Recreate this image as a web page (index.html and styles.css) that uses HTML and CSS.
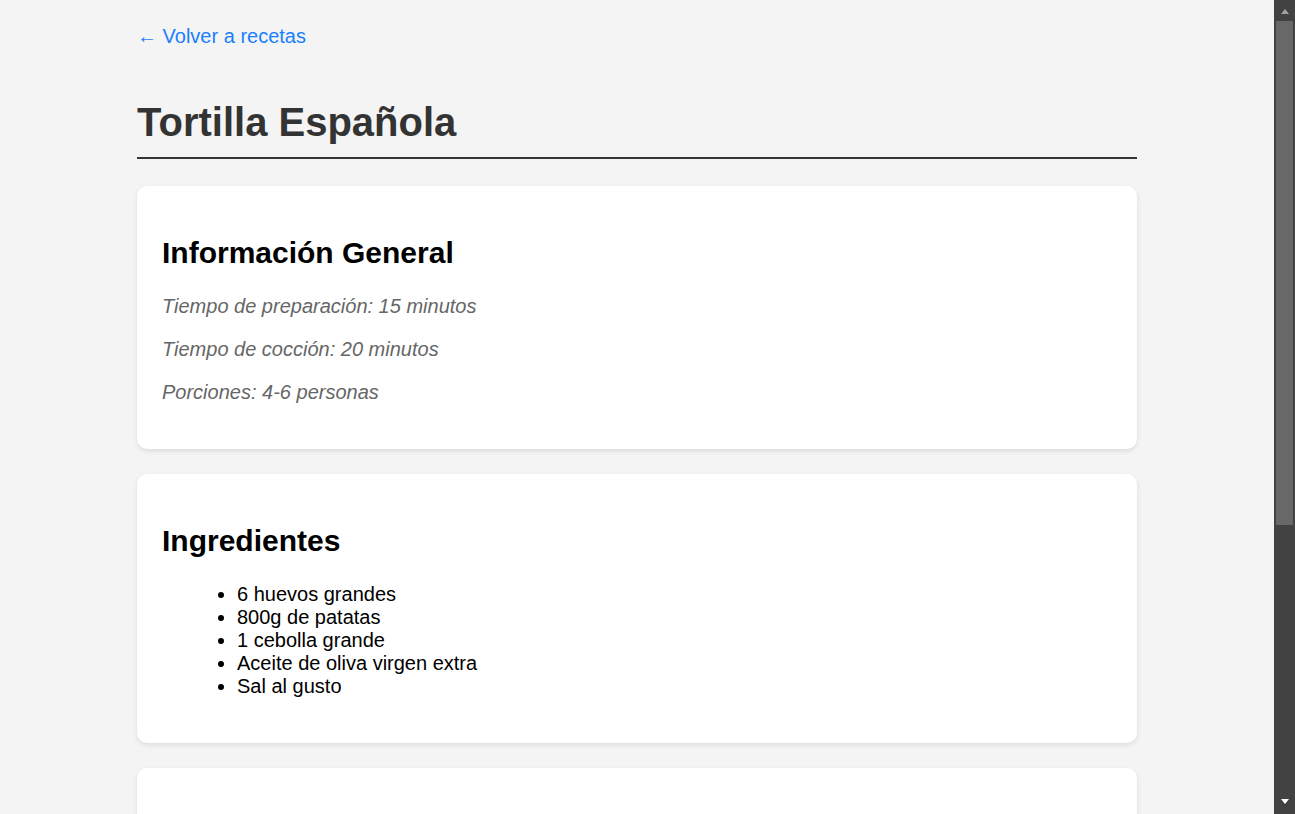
FILE: index.html
```html
<!DOCTYPE html>
<html lang="es">
<head>
<meta charset="utf-8">
<title>Tortilla Española</title>
<link rel="stylesheet" href="styles.css">
</head>
<body>
<div class="container">
  <div class="back"><a href="#" class="back-link">← Volver a recetas</a></div>
  <h1 class="title">Tortilla Española</h1>

  <section class="card">
    <h2 class="card-title">Información General</h2>
    <p class="meta">Tiempo de preparación: 15 minutos</p>
    <p class="meta">Tiempo de cocción: 20 minutos</p>
    <p class="meta">Porciones: 4-6 personas</p>
  </section>

  <section class="card">
    <h2 class="card-title">Ingredientes</h2>
    <ul class="list">
      <li>6 huevos grandes</li>
      <li>800g de patatas</li>
      <li>1 cebolla grande</li>
      <li>Aceite de oliva virgen extra</li>
      <li>Sal al gusto</li>
    </ul>
  </section>

  <section class="card">
    <h2 class="card-title">Preparación</h2>
    <ol class="list steps">
      <li>Pelar las patatas y cortarlas en láminas finas.</li>
      <li>Picar la cebolla en trozos pequeños.</li>
      <li>Calentar abundante aceite en una sartén a fuego medio.</li>
      <li>Freír las patatas y la cebolla hasta que estén tiernas.</li>
      <li>Escurrir el aceite sobrante.</li>
      <li>Batir los huevos en un bol grande con una pizca de sal.</li>
      <li>Mezclar las patatas y la cebolla con los huevos batidos.</li>
      <li>Dejar reposar la mezcla durante 5 minutos.</li>
      <li>Cuajar la tortilla en la sartén con un poco de aceite.</li>
      <li>Dar la vuelta con ayuda de un plato y terminar de cuajar.</li>
    </ol>
  </section>
</div>

<div class="scrollbar" aria-hidden="true">
  <div class="sb-btn sb-up"><span class="sb-arrow-up"></span></div>
  <div class="sb-track"><div class="sb-thumb"></div></div>
  <div class="sb-btn sb-down"><span class="sb-arrow-down"></span></div>
</div>
</body>
</html>
```

FILE: styles.css
```css
html {
  background: #f4f4f4;
}

body {
  margin: 0;
  padding: 25px 46px 25px 25px;
  background: #f4f4f4;
  color: #000;
  font-family: "Liberation Sans", Arial, sans-serif;
  font-size: 20px;
}

.container {
  max-width: 1000px;
  margin: 0 auto;
}

.back {
  line-height: 23px;
}

.back-link {
  color: #1a7fff;
  text-decoration: none;
}

.title {
  margin: 52px 0 27px;
  padding-bottom: 12px;
  border-bottom: 2px solid #333;
  color: #333;
  font-size: 40px;
  font-weight: bold;
}

.card {
  background: #fff;
  border-radius: 10px;
  padding: 25px;
  margin-bottom: 25px;
  box-shadow: 0 2px 5px rgba(0, 0, 0, 0.1);
}

.card-title {
  margin: 25px 0;
  font-size: 30px;
  font-weight: bold;
  color: #000;
}

.meta {
  margin: 20px 0;
  font-style: italic;
  color: #666;
}

.list {
  margin: 20px 0;
  padding-left: 75px;
}

.steps li {
  margin-bottom: 6px;
}

/* fake classic scrollbar, overlaid at the right edge */
.scrollbar {
  position: fixed;
  top: 0;
  right: 0;
  width: 21px;
  height: 100vh;
  background: #424242;
  display: flex;
  flex-direction: column;
}

.sb-btn {
  height: 21px;
  flex: none;
  display: flex;
  justify-content: center;
  box-sizing: border-box;
}

.sb-up {
  padding-top: 9px;
}

.sb-down {
  padding-top: 6px;
}

.sb-arrow-up {
  width: 0;
  height: 0;
  border-left: 4.5px solid transparent;
  border-right: 4.5px solid transparent;
  border-bottom: 5px solid #a3a3a3;
}

.sb-arrow-down {
  width: 0;
  height: 0;
  border-left: 4.5px solid transparent;
  border-right: 4.5px solid transparent;
  border-top: 5px solid #fff;
}

.sb-track {
  flex: 1;
  padding: 0 2px;
}

.sb-thumb {
  height: 504px;
  background: #686868;
}
```
